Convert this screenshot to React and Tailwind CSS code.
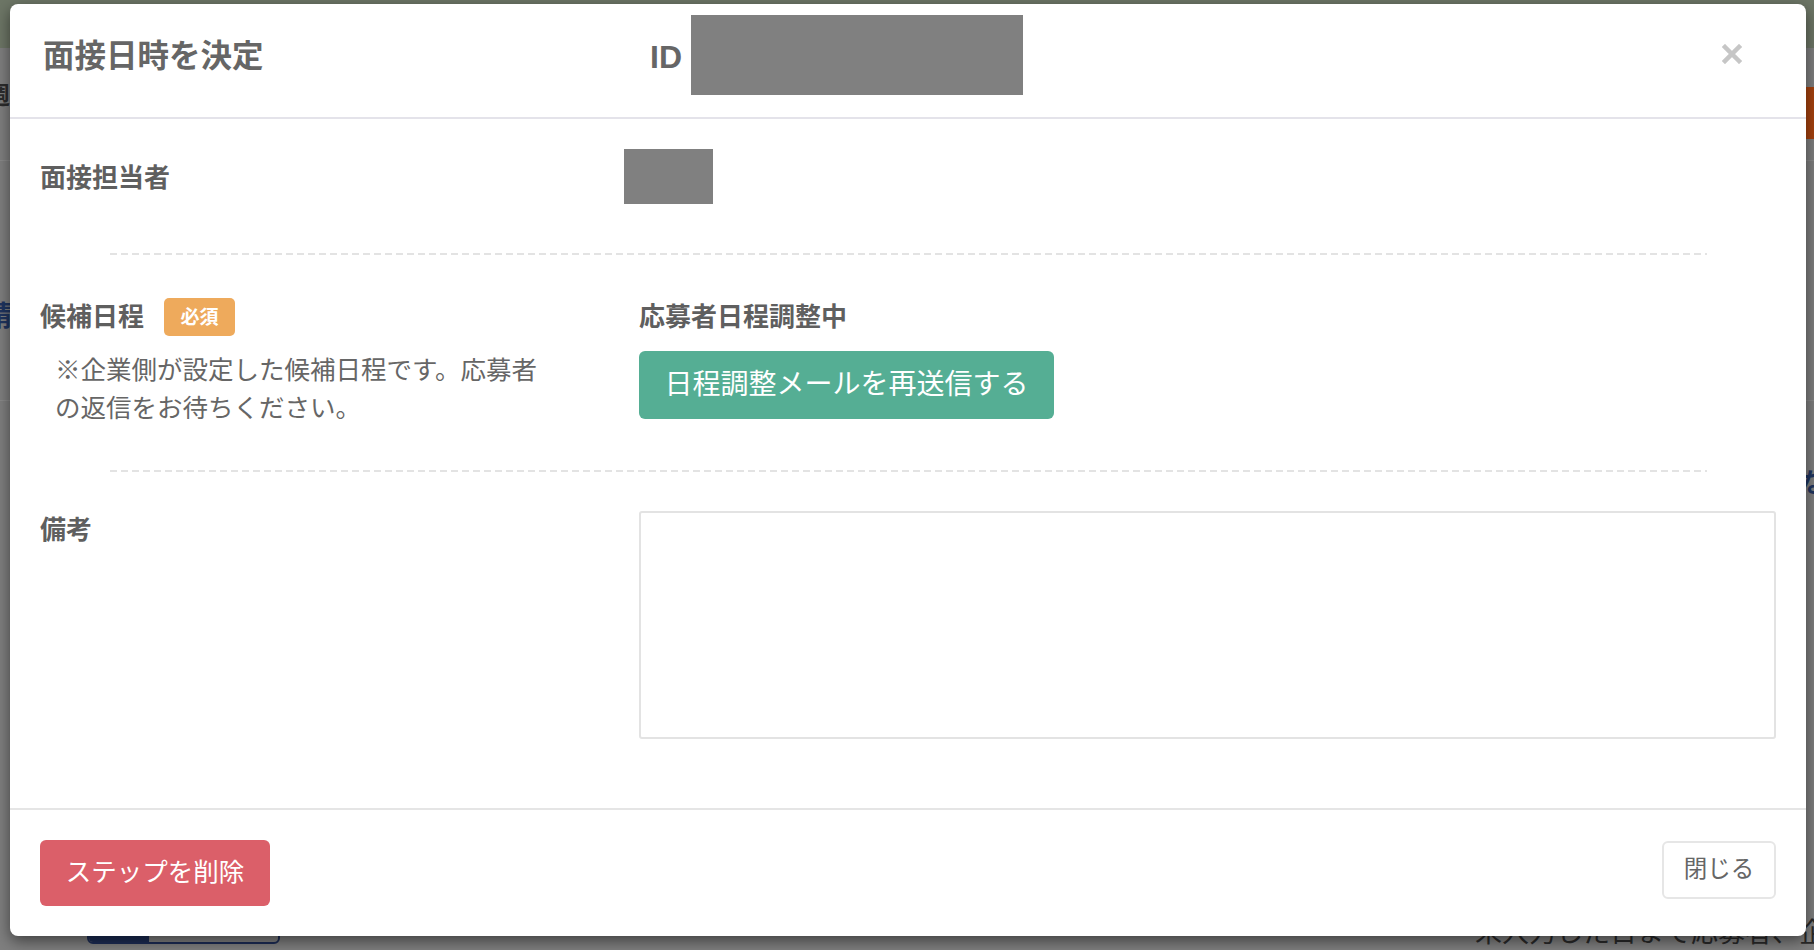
import React from "react";

const FONT = { fontFamily: '"Liberation Sans", "Noto Sans CJK JP", sans-serif' };

function Dashed() {
  return (
    <div className="ml-[100px] mr-[99px] h-[2px] bg-[repeating-linear-gradient(90deg,#e3e3e3_0_7px,transparent_7px_11px)]" />
  );
}

export default function App() {
  return (
    <div className="relative w-[1814px] h-[950px] overflow-hidden bg-[#7f7f7f]" style={FONT}>
      {/* dimmed page behind the modal */}
      <div className="absolute left-0 right-0 top-0 h-[48px] bg-[#6d7666]" />
      <div className="absolute left-0 right-0 top-[160px] h-[1px] bg-[#8a8a8a]" />
      <div className="absolute left-0 right-0 top-[400px] h-[1px] bg-[#8a8a8a]" />
      <div className="absolute left-[-14px] top-[84px] text-[24px] font-bold text-[#2c2c2c] leading-none">週</div>
      <div className="absolute left-[-16px] top-[303px] text-[28px] font-bold text-[#1f3560] leading-none">請</div>
      <div className="absolute right-0 top-[87px] w-[10px] h-[52px] bg-[#a7420e]" />
      <div className="absolute right-[-14px] top-[437px] text-[22px] font-bold text-[#222] leading-none">≡</div>
      <div className="absolute right-[-12px] top-[470px] text-[26px] font-bold text-[#1f3560] leading-none">な</div>
      <div className="absolute left-[87px] top-[920px] w-[193px] h-[24px] rounded-[6px] border-2 border-[#1c2c55] flex overflow-hidden">
        <div className="w-[60px] bg-[#1c2c55]" />
      </div>
      <div className="absolute left-[1475px] top-[920px] text-[27px] text-[#2a2a2a] leading-none whitespace-nowrap">未入力した日まで応募者、企業</div>

      {/* modal */}
      <div className="absolute left-[10px] top-[4px] w-[1796px] h-[932px] bg-white rounded-[8px] shadow-[0_5px_15px_rgba(0,0,0,0.5)] flex flex-col">
        {/* header */}
        <div className="flex items-center h-[115px] shrink-0 border-b-2 border-[#e4e3ea] pl-[33px] pr-[64px] pb-[8px]">
          <h4 className="w-[607px] text-[31.5px] font-bold text-[#666] leading-none">面接日時を決定</h4>
          <span className="text-[32px] font-bold text-[#666] leading-none">ID</span>
          <div className="ml-[9px] mb-[3px] w-[332px] h-[80px] bg-[#808080]" />
          <button className="ml-auto mb-[6px] w-[20px] h-[20px]" aria-label="close">
            <svg width="20" height="20" viewBox="0 0 20 20">
              <path d="M3 3 L17 17 M17 3 L3 17" stroke="#c6c6c6" strokeWidth="4.5" strokeLinecap="square" />
            </svg>
          </button>
        </div>

        {/* body */}
        <div className="flex-1 flex flex-col">
          {/* row 1 */}
          <div className="flex pt-[30px] pl-[30px] pr-[30px] pb-[49px]">
            <div className="w-[599px] h-[55px] flex items-center">
              <span className="text-[26px] font-bold text-[#5f5f5f] leading-none mt-[3px]">面接担当者</span>
            </div>
            <div className="w-[89px] h-[55px] bg-[#808080] -ml-[15px]" />
          </div>
          <Dashed />

          {/* row 2 */}
          <div className="flex pt-[43px] pl-[30px] pr-[30px] pb-[43px]">
            <div className="w-[599px]">
              <div className="flex items-center h-[38px]">
                <span className="text-[26px] font-bold text-[#5f5f5f] leading-[38px]">候補日程</span>
                <span className="ml-[20px] w-[71px] h-[38px] rounded-[5px] bg-[#eeaa5c] text-white text-[19px] font-bold flex items-center justify-center leading-none">必須</span>
              </div>
              <p className="mt-[15px] ml-[15px] w-[495px] text-[25.5px] leading-[38px] text-[#666]">
                ※企業側が設定した候補日程です。応募者の返信をお待ちください。
              </p>
            </div>
            <div className="flex-1">
              <div className="h-[38px] flex items-center">
                <span className="text-[26px] font-bold text-[#5f5f5f] leading-[38px]">応募者日程調整中</span>
              </div>
              <button className="mt-[15px] w-[415px] h-[68px] rounded-[6px] bg-[#55ae94] text-white text-[28px] leading-none flex items-center justify-center">
                日程調整メールを再送信する
              </button>
            </div>
          </div>
          <Dashed />

          {/* row 3 */}
          <div className="flex pt-[39px] pl-[30px] pr-[30px]">
            <div className="w-[599px]">
              <span className="text-[26px] font-bold text-[#5f5f5f] leading-[38px]">備考</span>
            </div>
            <textarea className="flex-1 h-[228px] border-2 border-[#e3e3e3] rounded-[3px] resize-none outline-none" />
          </div>
        </div>

        {/* footer */}
        <div className="h-[128px] shrink-0 border-t-2 border-[#e5e5e5] flex items-start justify-between px-[30px] pt-[30px]">
          <button className="w-[230px] h-[66px] rounded-[6px] bg-[#db5f69] text-white text-[25.5px] leading-none flex items-center justify-center">
            ステップを削除
          </button>
          <button className="mt-[1px] w-[114px] h-[58px] rounded-[6px] border-2 border-[#e6e6e6] bg-white text-[#666] text-[23.5px] leading-none flex items-center justify-center">
            閉じる
          </button>
        </div>
      </div>
    </div>
  );
}
